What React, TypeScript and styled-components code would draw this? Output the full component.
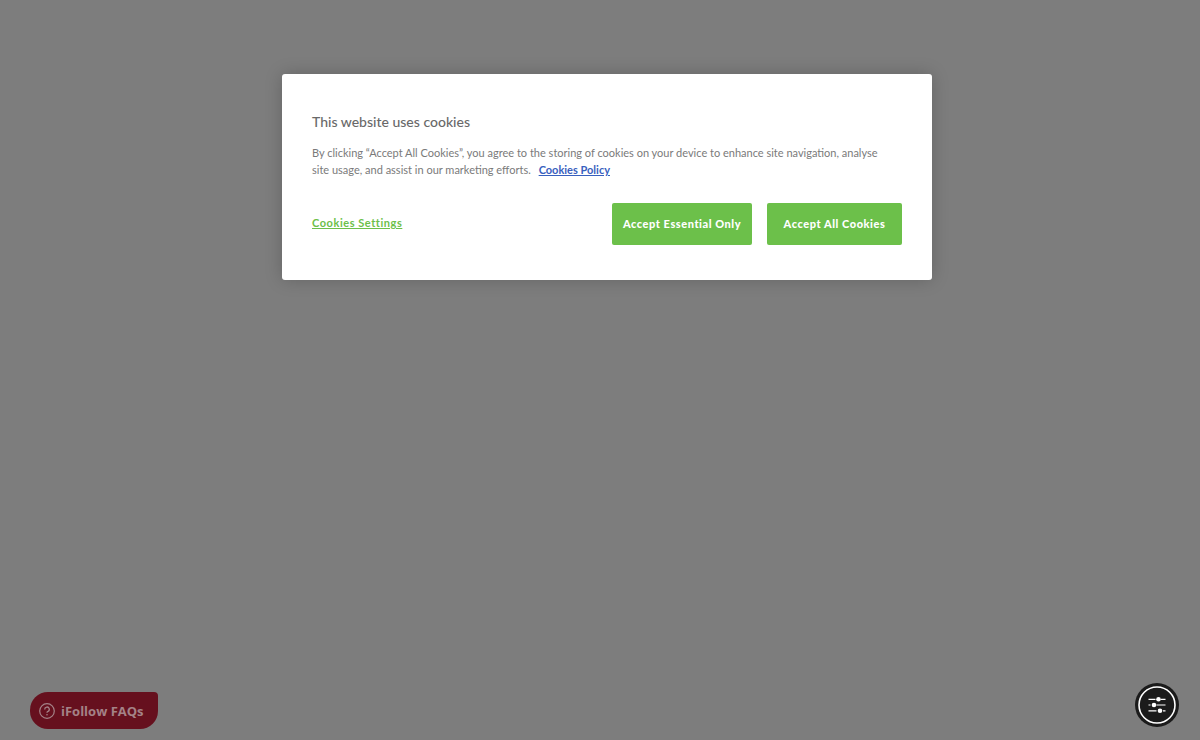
import React from "react";
import styled, { createGlobalStyle } from "styled-components";

const GlobalStyle = createGlobalStyle`
  *, *::before, *::after { box-sizing: border-box; }
  body {
    margin: 0;
    background: #7d7d7d;
    font-family: Lato, "Open Sans", sans-serif;
  }
`;

const Page = styled.div`
  min-height: 100vh;
  display: flex;
  flex-direction: column;
  justify-content: space-between;
  padding-top: 74px;
`;

const Dialog = styled.section`
  width: calc(100% - 32px);
  max-width: 650px;
  margin: 0 auto;
  padding: 40px 30px 35px;
  background: #fff;
  border-radius: 3px;
  box-shadow: 0 0 18px rgba(0, 0, 0, 0.2);
  color: #696969;
`;

const DialogRow = styled.div`
  padding-left: 14px;
`;

const Title = styled.h2`
  margin: 0 0 14px;
  font-size: 14px;
  line-height: 16px;
  font-weight: 500;
`;

const Message = styled.p`
  margin: 0 0 25px;
  padding-right: 10px;
  font-size: 11px;
  line-height: 17px;
  color: #7a7a7a;
`;

const PolicyLink = styled.a`
  margin-left: 5px;
  color: #3860be;
  font-weight: 700;
`;

const Actions = styled.div`
  display: flex;
  flex-wrap: wrap;
  align-items: center;
  gap: 15px;
`;

const SettingsButton = styled.button`
  margin: 0 auto 0 0;
  padding: 0 0 2px;
  border: 0;
  background: none;
  color: #6cc04a;
  font: 700 11px/16px Lato, sans-serif;
  letter-spacing: 0.05em;
  text-decoration: underline;
  cursor: pointer;
`;

const AcceptButton = styled.button<{ $width: number }>`
  min-width: ${({ $width }) => $width}px;
  height: 42px;
  padding: 0 10px;
  border: 0;
  border-radius: 2px;
  background: #6cc04a;
  color: #fff;
  font: 900 11px/16px Lato, sans-serif;
  letter-spacing: 0.05em;
  white-space: nowrap;
  cursor: pointer;
`;

const Launchers = styled.div`
  display: flex;
  justify-content: space-between;
  align-items: flex-end;
  padding: 0 21px 11px 30px;
`;

const FaqButton = styled.button`
  display: flex;
  align-items: center;
  gap: 6px;
  min-width: 128px;
  height: 37px;
  padding: 0 14px 0 9px;
  border: 0;
  border-radius: 18px 4px 18px 18px;
  background: #66101e;
  color: #a48287;
  font: 700 13px/20px "Open Sans", sans-serif;
  white-space: nowrap;
  cursor: pointer;
`;

const AccessButton = styled.button`
  width: 44px;
  height: 44px;
  margin-bottom: 2px;
  padding: 0;
  border: 0;
  border-radius: 50%;
  background: #1b1b1b;
  cursor: pointer;

  svg { display: block; }
`;

const HelpIcon = () => (
  <svg width="16" height="16" viewBox="0 0 16 16" fill="none" stroke="currentColor" aria-hidden="true">
    <circle cx="8" cy="8" r="7.3" strokeWidth="1.2" />
    <path d="M5.7 6.4a2.3 2.3 0 1 1 3.3 2c-.7.3-1 .7-1 1.4" strokeWidth="1.3" />
    <circle cx="8" cy="11.8" r=".8" fill="currentColor" stroke="none" />
  </svg>
);

const SlidersIcon = () => (
  <svg width="44" height="44" viewBox="0 0 44 44" fill="none" stroke="#fff" aria-hidden="true">
    <circle cx="22" cy="22" r="18" strokeWidth="1.6" />
    <path d="M13.5 16.3h7M26 16.3h4.5M13.5 22h2M21.5 22h9M13.5 27.8h8M28 27.8h2.5" strokeWidth="1.2" />
    <g fill="#fff" stroke="none">
      <circle cx="23.5" cy="16.3" r="2.3" />
      <circle cx="19" cy="22" r="2.3" />
      <circle cx="25" cy="27.8" r="2.3" />
    </g>
  </svg>
);

export default function App() {
  return (
    <>
      <GlobalStyle />
      <Page>
        <DialogRow>
          <Dialog role="dialog" aria-labelledby="cookie-title">
            <Title id="cookie-title">This website uses cookies</Title>
            <Message>
              By clicking “Accept All Cookies”, you agree to the storing of cookies on your device to enhance site
              navigation, analyse site usage, and assist in our marketing efforts.{" "}
              <PolicyLink href="#policy">Cookies Policy</PolicyLink>
            </Message>
            <Actions>
              <SettingsButton type="button">Cookies Settings</SettingsButton>
              <AcceptButton type="button" $width={140}>Accept Essential Only</AcceptButton>
              <AcceptButton type="button" $width={135}>Accept All Cookies</AcceptButton>
            </Actions>
          </Dialog>
        </DialogRow>
        <Launchers>
          <FaqButton type="button">
            <HelpIcon />
            iFollow FAQs
          </FaqButton>
          <AccessButton type="button" aria-label="Accessibility settings">
            <SlidersIcon />
          </AccessButton>
        </Launchers>
      </Page>
    </>
  );
}
